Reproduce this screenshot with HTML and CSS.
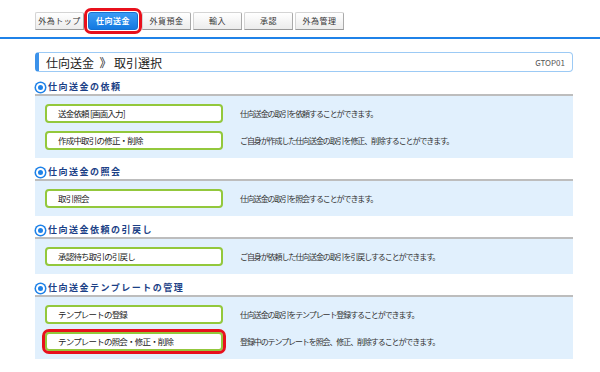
FILE: index.html
```html
<!DOCTYPE html>
<html lang="ja">
<head>
    <meta charset="UTF-8">
    <title>仕向送金 取引選択</title>
    <link rel="stylesheet" href="styles.css">
</head>
<body>

    <div class="tabs">
        <a class="tab">外為トップ</a>
        <a class="tab active">仕向送金</a>
        <a class="tab">外貨預金</a>
        <a class="tab">輸入</a>
        <a class="tab">承認</a>
        <a class="tab">外為管理</a>
    </div>

    <div class="main">
        <div class="page-title">
            <span>仕向送金 &nbsp;》 取引選択</span>
            <span class="code">GTOP01</span>
        </div>

        <h2 class="sec">仕向送金の依頼</h2>
        <div class="panel">
            <div class="row">
                <a class="btn">送金依頼 [画面入力]</a>
                <span class="desc">仕向送金の取引を依頼することができます。</span>
            </div>
            <div class="row">
                <a class="btn">作成中取引の修正・削除</a>
                <span class="desc">ご自身が作成した仕向送金の取引を修正、削除することができます。</span>
            </div>
        </div>

        <h2 class="sec">仕向送金の照会</h2>
        <div class="panel">
            <div class="row">
                <a class="btn">取引照会</a>
                <span class="desc">仕向送金の取引を照会することができます。</span>
            </div>
        </div>

        <h2 class="sec">仕向送金依頼の引戻し</h2>
        <div class="panel">
            <div class="row">
                <a class="btn">承認待ち取引の引戻し</a>
                <span class="desc">ご自身が依頼した仕向送金の取引を引戻しすることができます。</span>
            </div>
        </div>

        <h2 class="sec">仕向送金テンプレートの管理</h2>
        <div class="panel">
            <div class="row">
                <a class="btn">テンプレートの登録</a>
                <span class="desc">仕向送金の取引をテンプレート登録することができます。</span>
            </div>
            <div class="row">
                <a class="btn marked">テンプレートの照会・修正・削除</a>
                <span class="desc">登録中のテンプレートを照会、修正、削除することができます。</span>
            </div>
        </div>
    </div>

</body>
</html>
```

FILE: styles.css
```css
body {
    margin: 0;
    font-family: "Noto Sans CJK JP", "Noto Sans", sans-serif;
    color: #222;
    background: #fff;
}

/* タブ */
.tabs {
    display: flex;
    gap: 2px;
    padding: 12px 0 7px 35px;
    border-bottom: 2px solid #1f82e8;
}
.tab {
    width: 49px;
    height: 18px;
    box-sizing: border-box;
    font-size: 8px;
    line-height: 16px;
    letter-spacing: 0.5px;
    text-align: center;
    color: #333;
    background: linear-gradient(#ffffff, #ececec);
    border: 1px solid #d4d4d4;
    border-right-color: #aaa;
    border-bottom-color: #999;
    border-radius: 2px 2px 0 0;
}
.tab.active {
    width: 50px;
    margin: 0 2px;
    color: #fff;
    font-weight: bold;
    background: linear-gradient(#3a9cf6, #1479e0);
    border-color: #1670d0;
    outline: 3px solid #e8101c;
    outline-offset: 1px;
    border-radius: 3px;
}

.main {
    width: 538px;
    margin-left: 35px;
}

.page-title {
    margin-top: 13px;
    height: 20px;
    box-sizing: border-box;
    display: flex;
    align-items: center;
    justify-content: space-between;
    padding: 0 7px 0 7px;
    border: 1px solid #9ccaf5;
    border-left: 4px solid #3c92ea;
    border-radius: 4px;
    font-size: 12px;
}
.page-title .code {
    font-size: 8px;
    color: #555;
}

/* 見出し */
.sec {
    margin: 8px 0 0;
    height: 14px;
    line-height: 14px;
    font-size: 9px;
    font-weight: bold;
    color: #1b3f86;
    letter-spacing: 1.5px;
    border-bottom: 2px solid #bdbdbd;
    display: flex;
    align-items: center;
    gap: 3px;
}
.sec::before {
    content: "";
    width: 5px;
    height: 5px;
    border-radius: 50%;
    background: #1f82e8;
    border: 2px solid #fff;
    box-shadow: 0 0 0 1.5px #1f82e8;
    margin-left: 1px;
}
.panel + .sec {
    margin-top: 7px;
}

.panel {
    background: #e1f0fd;
    padding: 8px 10px;
    display: flex;
    flex-direction: column;
    gap: 8px;
}
.row {
    display: flex;
    align-items: center;
}
.btn {
    width: 178px;
    height: 19px;
    box-sizing: border-box;
    border: 2px solid #93c83c;
    border-radius: 4px;
    background: #fff;
    font-size: 8.5px;
    line-height: 15px;
    letter-spacing: -0.8px;
    padding-left: 11px;
    color: #222;
}
.btn.marked {
    outline: 3px solid #e8101c;
    outline-offset: 0;
}
.desc {
    margin-left: 17px;
    font-size: 8px;
    letter-spacing: -1.1px;
    color: #333;
}
```
